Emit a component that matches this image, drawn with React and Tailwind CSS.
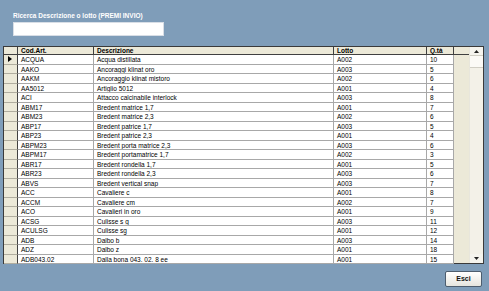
import React from "react";

const rows = [
  ["ACQUA", "Acqua distillata", "A002", "10"],
  ["AAKO", "Ancoraggi klinat oro", "A003", "5"],
  ["AAKM", "Ancoraggio klinat mistoro", "A002", "6"],
  ["AA5012", "Artiglio 5012", "A001", "4"],
  ["ACI", "Attacco calcinabile interlock", "A003", "8"],
  ["ABM17", "Bredent matrice 1,7", "A001", "7"],
  ["ABM23", "Bredent matrice 2,3", "A002", "6"],
  ["ABP17", "Bredent patrice 1,7", "A003", "5"],
  ["ABP23", "Bredent patrice 2,3", "A001", "4"],
  ["ABPM23", "Bredent porta matrice 2,3", "A003", "6"],
  ["ABPM17", "Bredent portamatrice 1,7", "A002", "3"],
  ["ABR17", "Bredent rondella 1,7", "A001", "5"],
  ["ABR23", "Bredent rondella 2,3", "A003", "6"],
  ["ABVS", "Bredent vertical snap", "A003", "7"],
  ["ACC", "Cavaliere c", "A001", "8"],
  ["ACCM", "Cavaliere cm", "A002", "7"],
  ["ACO", "Cavalieri in oro", "A001", "9"],
  ["ACSG", "Culisse s g", "A003", "11"],
  ["ACULSG", "Culisse sg", "A001", "12"],
  ["ADB", "Dalbo b", "A003", "14"],
  ["ADZ", "Dalbo z", "A001", "18"],
  ["ADB043.02", "Dalla bona 043. 02. 8 ee", "A001", "15"],
];

const cols = "grid grid-cols-[14px_76px_240px_93px_27px_1fr]";
const cell =
  "bg-white border-r border-b border-[#a8a8a8] pl-[3px] overflow-hidden whitespace-nowrap text-black";
const head =
  "border-r border-[#404040] pl-[3px] font-bold leading-[8px] text-black";

export default function App() {
  return (
    <div
      className="w-[489px] h-[291px] bg-[#7f9db9] flex flex-col overflow-hidden"
      style={{ fontFamily: '"Liberation Sans", Arial, sans-serif' }}
    >
      <div className="pl-[13px] pt-[12px] text-[6.5px] font-bold text-white leading-[8px]">
        Ricerca Descrizione o lotto (PREMI INVIO)
      </div>
      <div className="ml-[13px] mt-[2px] w-[151px] h-[14px] bg-white border border-[#d8dee6]" />
      <div className="ml-[3px] mt-[10px] w-[481px] h-[218px] border border-[#3a3a3a] bg-[#ece9d8] flex">
        <div className="flex-1 flex flex-col text-[6.5px] leading-[9px]">
          <div className={`${cols} h-[8px] border-b border-[#404040] bg-[#ece9d8]`}>
            <div className="border-r border-[#404040]" />
            <div className={head}>Cod.Art.</div>
            <div className={head}>Descrizione</div>
            <div className={head}><span className="text-[#000000]">Lotto</span></div>
            <div className={head}><span className="text-[#000000]">Q.tà</span></div>
            <div />
          </div>
          {rows.map((r, i) => (
            <div key={i} className={`${cols} h-[9.5px]`}>
              <div className="border-r border-[#404040] border-b border-b-[#b0ad9f] bg-[#ece9d8] flex items-center justify-center">
                {i === 0 && (
                  <svg width="5" height="6" viewBox="0 0 5 6">
                    <path d="M0 0 L4 3 L0 6 Z" fill="#000" />
                  </svg>
                )}
              </div>
              <div className={cell}>{r[0]}</div>
              <div className={cell}>{r[1]}</div>
              <div className={cell}><span className="text-[#000000]">{r[2]}</span></div>
              <div className={cell}><span className="text-[#000000]">{r[3]}</span></div>
              <div />
            </div>
          ))}
        </div>
        <div className="w-[14px] flex flex-col bg-[#f3f1e8] border-l border-[#e8e6dc]">
          <div className="h-[9px] bg-[#f5f4ee] border-b border-[#d0cec4] flex items-center justify-center">
            <svg width="5" height="3" viewBox="0 0 5 3">
              <path d="M0 3 L2.5 0 L5 3 Z" fill="#222" />
            </svg>
          </div>
          <div className="h-[12px] bg-[#fbfaf6] border-b border-[#d0cec4]" />
          <div className="flex-1" />
          <div className="h-[9px] bg-[#f5f4ee] flex items-center justify-center">
            <svg width="5" height="3" viewBox="0 0 5 3">
              <path d="M0 0 L5 0 L2.5 3 Z" fill="#222" />
            </svg>
          </div>
        </div>
      </div>
      <div className="flex justify-end pr-[7px] mt-[7px]">
        <div className="w-[37px] h-[16px] rounded-[2px] border border-[#4d5d6e] bg-gradient-to-b from-white to-[#e6e5de] flex items-center justify-center text-[7px] font-bold text-[#111]">
          Esci
        </div>
      </div>
    </div>
  );
}
